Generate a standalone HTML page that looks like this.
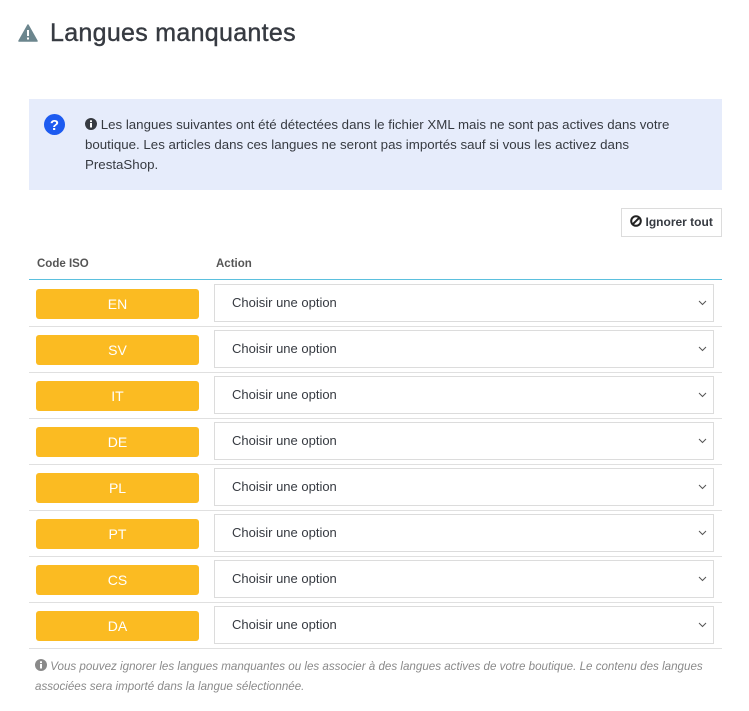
<!DOCTYPE html><html><head><style>
body{margin:0;width:749px;height:711px;background:#fff;font-family:"Liberation Sans",sans-serif;color:#363a41;position:relative;overflow:hidden}
.a{position:absolute}
h1{position:absolute;left:50px;top:19px;margin:0;font-size:25px;font-weight:normal;color:#363a41;letter-spacing:.3px;-webkit-text-stroke:.4px #363a41}
.alert{left:29px;top:99px;width:693px;height:91px;background:#e6ecfb}
.alert p{position:absolute;left:56px;top:16px;margin:0;width:620px;font-size:13.3px;line-height:20px;color:#363a41}
.btn{left:621px;top:208px;width:99px;height:27px;border:1px solid #dcdcdc;font-size:12px;line-height:27px;text-align:center;font-weight:bold;color:#363a41}
.th{top:258px;font-size:11.5px;font-weight:bold;color:#555}
.row{left:29px;width:693px;height:46px;border-bottom:1px solid #e0e0e0}
.badge{position:absolute;left:7px;top:9px;width:163px;height:30px;background:#fbbb22;border-radius:3px;color:#fff;font-size:14px;line-height:30px;text-align:center}
.sel{position:absolute;left:185px;top:4px;width:498px;height:36px;border:1px solid #dcdcdc;font-size:13px;line-height:36px;color:#363a41}
.sel span{position:absolute;left:17px}
.sel svg{position:absolute;right:6px;top:15px}
.foot{left:35px;top:657px;width:690px;font-size:11.6px;line-height:20px;color:#8a8a8a;font-style:italic}
</style></head><body>
<svg class="a" style="left:18px;top:24px" width="20" height="18" viewBox="0 0 20 18"><path d="M10 1L19 17H1Z" fill="#6c868e" stroke="#6c868e" stroke-width="1.5" stroke-linejoin="round"/><rect x="9" y="6" width="2" height="6" fill="#fff"/><rect x="9" y="13.5" width="2" height="2" fill="#fff"/></svg>
<h1>Langues manquantes</h1>
<div class="a alert">
<svg class="a" style="left:15px;top:15px" width="21" height="21" viewBox="0 0 21 21"><circle cx="10.5" cy="10.5" r="10.5" fill="#1d5bf0"/><text x="10.5" y="16" font-size="15" font-weight="bold" fill="#fff" text-anchor="middle" font-family="Liberation Sans">?</text></svg>
<p><svg width="12" height="12" viewBox="0 0 12 12" style="vertical-align:-1px"><circle cx="6" cy="6" r="6" fill="#363a41"/><rect x="5" y="5" width="2" height="4.5" fill="#fff"/><rect x="5" y="2.3" width="2" height="1.8" fill="#fff"/></svg> Les langues suivantes ont été détectées dans le fichier XML mais ne sont pas actives dans votre boutique. Les articles dans ces langues ne seront pas importés sauf si vous les activez dans PrestaShop.</p></div>
<div class="a btn"><svg width="12" height="12" viewBox="0 0 12 12" style="vertical-align:-1px"><circle cx="6" cy="6" r="4.8" fill="none" stroke="#222" stroke-width="2"/><path d="M2.5 9.5L9.5 2.5" stroke="#222" stroke-width="2"/></svg> Ignorer tout</div>
<div class="a th" style="left:37px">Code ISO</div>
<div class="a th" style="left:216px">Action</div>
<div class="a row" style="top:280px"><div class="badge">EN</div><div class="sel"><span>Choisir une option</span><svg width="9" height="6"><path d="M1 1l3.5 3.5L8 1" fill="none" stroke="#555"/></svg></div></div>
<div class="a row" style="top:326px"><div class="badge">SV</div><div class="sel"><span>Choisir une option</span><svg width="9" height="6"><path d="M1 1l3.5 3.5L8 1" fill="none" stroke="#555"/></svg></div></div>
<div class="a row" style="top:372px"><div class="badge">IT</div><div class="sel"><span>Choisir une option</span><svg width="9" height="6"><path d="M1 1l3.5 3.5L8 1" fill="none" stroke="#555"/></svg></div></div>
<div class="a row" style="top:418px"><div class="badge">DE</div><div class="sel"><span>Choisir une option</span><svg width="9" height="6"><path d="M1 1l3.5 3.5L8 1" fill="none" stroke="#555"/></svg></div></div>
<div class="a row" style="top:464px"><div class="badge">PL</div><div class="sel"><span>Choisir une option</span><svg width="9" height="6"><path d="M1 1l3.5 3.5L8 1" fill="none" stroke="#555"/></svg></div></div>
<div class="a row" style="top:510px"><div class="badge">PT</div><div class="sel"><span>Choisir une option</span><svg width="9" height="6"><path d="M1 1l3.5 3.5L8 1" fill="none" stroke="#555"/></svg></div></div>
<div class="a row" style="top:556px"><div class="badge">CS</div><div class="sel"><span>Choisir une option</span><svg width="9" height="6"><path d="M1 1l3.5 3.5L8 1" fill="none" stroke="#555"/></svg></div></div>
<div class="a row" style="top:602px"><div class="badge">DA</div><div class="sel"><span>Choisir une option</span><svg width="9" height="6"><path d="M1 1l3.5 3.5L8 1" fill="none" stroke="#555"/></svg></div></div>
<div class="a" style="left:29px;top:279px;width:693px;height:1px;background:#5bc0de;z-index:5"></div>
<div class="a foot"><svg width="12" height="12" viewBox="0 0 12 12" style="vertical-align:-1px"><circle cx="6" cy="6" r="6" fill="#8a8a8a"/><rect x="5" y="5" width="2" height="4.5" fill="#fff"/><rect x="5" y="2.3" width="2" height="1.8" fill="#fff"/></svg> Vous pouvez ignorer les langues manquantes ou les associer à des langues actives de votre boutique. Le contenu des langues associées sera importé dans la langue sélectionnée.</div>
</body></html>
